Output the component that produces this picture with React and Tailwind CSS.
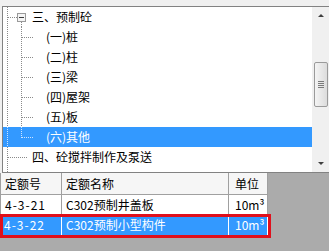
import React from "react";

const font = { fontFamily: '"Noto Sans CJK SC", "Liberation Sans", sans-serif' };

// tree connector drawn per row; x origin is the tree's inner left edge
const Lines = ({ kind, light }) => {
  const c = light ? "#cfe4ff" : "#8a8a8a";
  const w = kind === "child" ? 42 : 28;
  return (
    <svg width={w} height="20" className="shrink-0" shapeRendering="crispEdges">
      <line x1="4.5" y1="0" x2="4.5" y2="20" stroke={c} strokeDasharray="1 1" />
      {kind === "root" && (
        <>
          <line x1="5" y1="10.5" x2="14" y2="10.5" stroke={c} strokeDasharray="1 1" />
          <rect x="14.5" y="6.5" width="8" height="8" fill="#f4f4f4" stroke="#9a9a9a" />
          <line x1="16" y1="10.5" x2="21" y2="10.5" stroke="#3c3c3c" />
          <line x1="18.5" y1="15" x2="18.5" y2="20" stroke={c} strokeDasharray="1 1" />
        </>
      )}
      {kind === "sibling" && (
        <line x1="5" y1="10.5" x2="24" y2="10.5" stroke={c} strokeDasharray="1 1" />
      )}
      {kind === "child" && (
        <>
          <line x1="18.5" y1="0" x2="18.5" y2={light ? 11 : 20} stroke={c} strokeDasharray="1 1" />
          <line x1="19" y1="10.5" x2="31" y2="10.5" stroke={c} strokeDasharray="1 1" />
        </>
      )}
    </svg>
  );
};

const rows = [
  { kind: "root", text: "三、预制砼" },
  { kind: "child", text: "(一)桩" },
  { kind: "child", text: "(二)柱" },
  { kind: "child", text: "(三)梁" },
  { kind: "child", text: "(四)屋架" },
  { kind: "child", text: "(五)板" },
  { kind: "child", text: "(六)其他", selected: true },
  { kind: "sibling", text: "四、砼搅拌制作及泵送" },
];

const Scrollbar = () => (
  <div className="w-[17px] shrink-0 bg-[#f0f0f0] flex flex-col items-center">
    <div className="h-[17px] flex items-center justify-center">
      <div className="w-0 h-0 border-l-[3px] border-r-[3px] border-b-[3px] border-l-transparent border-r-transparent border-b-[#404040]" />
    </div>
    <div className="h-[38px]" />
    <div className="w-[14px] h-[45px] rounded-[2px] border border-[#9a9a9a] bg-gradient-to-r from-[#f4f4f4] to-[#dcdcdc] flex flex-col items-center justify-center gap-[1px]">
      <div className="w-[6px] h-px bg-[#7a7a7a]" />
      <div className="w-[6px] h-px bg-[#7a7a7a]" />
      <div className="w-[6px] h-px bg-[#7a7a7a]" />
      <div className="w-[6px] h-px bg-[#7a7a7a]" />
    </div>
    <div className="flex-1" />
    <div className="h-[17px] flex items-center justify-center">
      <div className="w-0 h-0 border-l-[3px] border-r-[3px] border-t-[3px] border-l-transparent border-r-transparent border-t-[#404040]" />
    </div>
  </div>
);

const Cell = ({ w, children, className = "" }) => (
  <div className={`${w} shrink-0 flex items-center pl-[4px] border-r border-[#a0a0a0] ${className}`}>
    {children}
  </div>
);

export default function App() {
  return (
    <div className="w-[329px] h-[251px] bg-[#ababab] flex flex-col overflow-hidden text-[12px] text-black" style={font}>
      <div className="bg-[#f0f0f0] pt-[6px] pl-[2px]">
        <div className="h-[167px] flex border-l border-t border-b border-[#828282] bg-white">
          <div className="flex-1 flex flex-col">
            <div className="h-px" />
            {rows.map((r, i) => (
              <div
                key={i}
                className={`h-[20px] flex items-center ${r.selected ? "bg-[#3399ff] text-white" : ""}`}
              >
                <Lines kind={r.kind} light={r.selected} />
                <span className="pl-[1px]">{r.text}</span>
              </div>
            ))}
            <div className="flex-1 flex">
              <svg width="28" height="6" shapeRendering="crispEdges">
                <line x1="4.5" y1="0" x2="4.5" y2="6" stroke="#8a8a8a" strokeDasharray="1 1" />
              </svg>
            </div>
          </div>
          <Scrollbar />
        </div>
      </div>
      <div className="w-[268px] flex flex-col">
        <div className="h-[22px] flex bg-[#f6f6f6] border-b border-l border-[#a0a0a0]">
          <Cell w="w-[61px]">定额号</Cell>
          <Cell w="w-[167px]">定额名称</Cell>
          <Cell w="w-[39px]" className="pl-[6px]">单位</Cell>
        </div>
        <div className="h-[20px] flex bg-white border-b border-l border-[#a0a0a0]">
          <Cell w="w-[61px]" className="tracking-[1px]">4-3-21</Cell>
          <Cell w="w-[167px]">C302预制井盖板</Cell>
          <Cell w="w-[39px]" className="pl-[6px]">10m³</Cell>
        </div>
        <div className="relative h-[20px] flex bg-[#3399ff] text-white">
          <Cell w="w-[62px]" className="border-white tracking-[1px]">4-3-22</Cell>
          <Cell w="w-[167px]" className="border-white">C302预制小型构件</Cell>
          <Cell w="w-[39px]" className="pl-[6px] border-white">10m³</Cell>
          <div className="absolute left-0 -right-[3px] -top-[1px] -bottom-[3px] border-[3px] border-[#e0101c]" />
        </div>
      </div>
    </div>
  );
}
